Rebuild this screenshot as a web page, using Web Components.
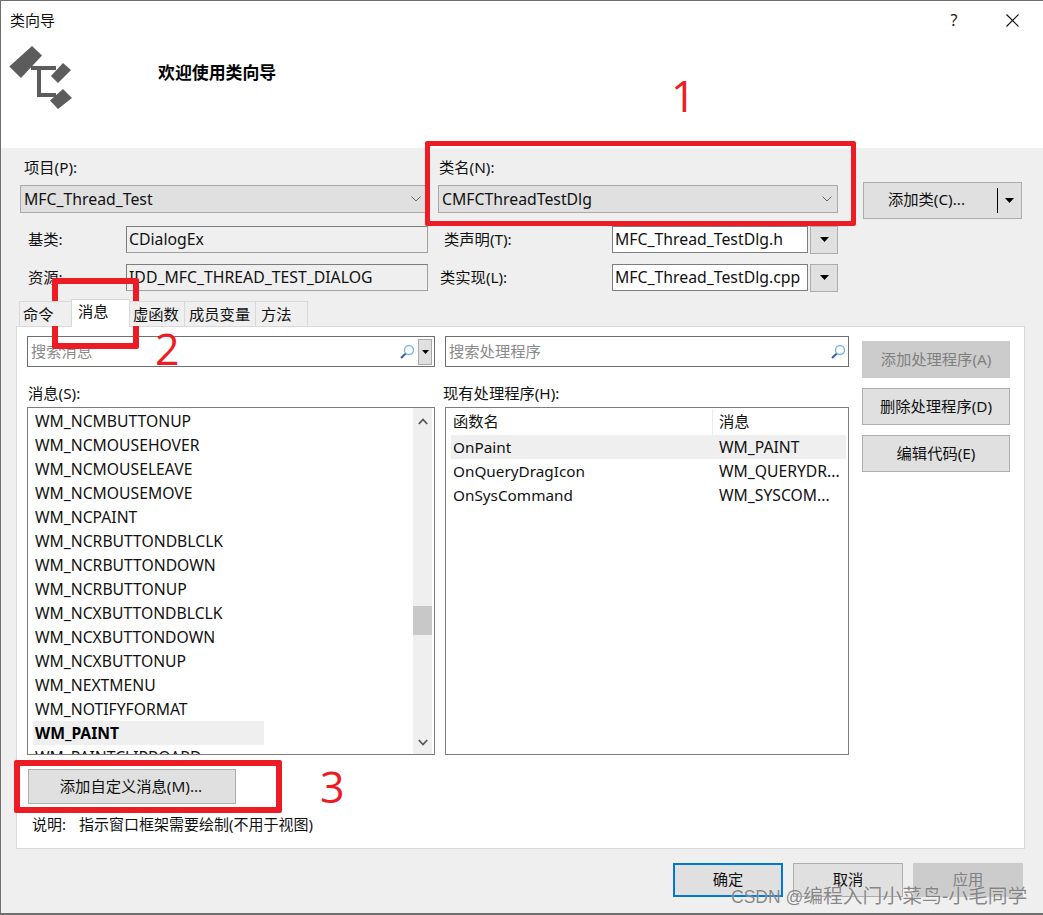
<!DOCTYPE html>
<html lang="zh-CN">
<head>
<meta charset="utf-8">
<title>类向导</title>
<style>
html,body{margin:0;padding:0;background:#fff}
body{width:1043px;height:915px;overflow:hidden;position:relative;font:15.3px/20px "Noto Sans","Noto Sans CJK SC",sans-serif;color:#111}
</style>
</head>
<body>
<x-dialog>
  <x-wizard-header></x-wizard-header>
  <x-class-form></x-class-form>
  <x-tab-strip></x-tab-strip>
  <x-message-pane></x-message-pane>
  <x-dialog-footer></x-dialog-footer>
</x-dialog>
<x-annot style="--l:425px;--t:141px;--w:431px;--h:85px;--b:5px"></x-annot>
<x-annot style="--l:52px;--t:278px;--w:87px;--h:71px;--b:6px"></x-annot>
<x-annot style="--l:14px;--t:760px;--w:268px;--h:53px;--b:6px"></x-annot>
<x-mark style="--l:671px;--t:66px">1</x-mark>
<x-mark style="--l:155px;--t:319px">2</x-mark>
<x-mark style="--l:320px;--t:757px">3</x-mark>
<x-watermark>CSDN @<span style="font-size:19.800px">编程入门小菜鸟-小毛同学</span></x-watermark>
<script>
const FONT='"Noto Sans","Noto Sans CJK SC",sans-serif';
function def(name,css,html){
  customElements.define(name,class extends HTMLElement{
    constructor(){super();const r=this.attachShadow({mode:'open'});r.innerHTML='<style>'+css+'</style>'+html;}
  });
}
const DOWN='<svg width="9" height="5" viewBox="0 0 9 5"><path d="M0 0h9L4.5 5z" fill="#000"/></svg>';
const MAG='<svg width="16" height="16" viewBox="0 0 16 16" fill="none"><circle cx="10" cy="6" r="4.5" stroke="#7db6e2" stroke-width="1.4"/><path d="M6.6 9.6 2 14" stroke="#2d5c9e" stroke-width="2"/></svg>';

def('x-dialog',`:host{display:flex;flex-direction:column;box-sizing:border-box;width:1043px;height:915px;background:#efefef;border:solid #6f6f6f;border-width:1px 0 2px 1px;position:relative}`,`<slot></slot>`);

def('x-wizard-header',`:host{display:block;height:147px;box-sizing:border-box;background:#fff;padding:9px 0 0 9px}
.bar{display:flex;align-items:center;height:20px;font-size:15px}
.t{flex:1}.q{width:20px;text-align:center;margin-right:42px;color:#222;font-size:16px}
.x{margin-right:24px;display:flex}
.main{display:flex;align-items:flex-start;margin-top:15px}
svg.logo{display:block;flex:none;margin-left:-1px}
h1{font:bold 16.9px/22px ${FONT};margin:17px 0 0 85px;color:#000}`,
`<div class="bar"><span class="t">类向导</span><span class="q">?</span><span class="x"><svg width="13" height="13" viewBox="0 0 13 13"><path d="M.5.5l12 12M12.5.5l-12 12" stroke="#111" stroke-width="1.1"/></svg></span></div>
<div class="main"><svg class="logo" width="64" height="66" viewBox="9 45 64 66"><path fill="#5c5c5c" d="M9.3 66.6 32 46l10 9.4L21 78zM51 76l12-13 8 7-13 13zM50 100.6 63 89l9 9-14 11z"/><path fill="none" stroke="#5c5c5c" stroke-width="4" d="M31 68H56M39 68V95H56"/></svg><h1>欢迎使用类向导</h1></div>`);

def('x-combo',`:host{display:flex;align-items:center;box-sizing:border-box;height:28px;background:#e0e0e0;border:1px solid #a9a9a9;padding:0 4px 0 3px;font-size:15.8px}
.v{flex:1;white-space:nowrap}svg{display:block;margin-right:1px}`,
`<span class="v"><slot></slot></span><svg width="10" height="6" viewBox="0 0 10 6" fill="none"><path d="M.5.5 5 5 9.500.5" stroke="#666" stroke-width="1"/></svg>`);

def('x-edit',`:host{display:flex;align-items:center;box-sizing:border-box;height:27px;border:1px solid #7d7d7d;border-right-color:#a0a0a0;border-bottom-color:#a0a0a0;padding:0 2px 2px 2px;white-space:nowrap;overflow:hidden;background:#efefef;font-size:15.8px}
:host([white]){background:#fff;border-color:#7d7d7d}`,`<slot></slot>`);

def('x-drop',`:host{display:flex;align-items:center;justify-content:center;box-sizing:border-box;width:28px;height:28px;background:#e0e0e0;border:1px solid #adadad}`,DOWN);

def('x-btn',`:host{display:flex;align-items:center;justify-content:center;box-sizing:border-box;background:#e0e0e0;border:1px solid #adadad;white-space:nowrap;color:#111;padding-bottom:2px}
:host([disabled]){background:#ccc;border-color:#ccc;color:#808080}
:host([primary]){border:2px solid #0078d7}`,`<slot></slot>`);

def('x-split-btn',`:host{display:flex;align-items:center;box-sizing:border-box;width:159px;height:37px;background:#e0e0e0;border:1px solid #adadad}
.l{width:125px;text-align:center;box-sizing:border-box;margin-right:8px;padding-bottom:3px}.d{width:1px;height:25px;background:#000}.a{flex:1;display:flex;justify-content:center}`,
`<span class="l"><slot></slot></span><span class="d"></span><span class="a">${DOWN}</span>`);

def('x-class-form',`:host{display:block;padding:0 0 0 19px}
.top{display:grid;grid-template-columns:407px 400px 159px;column-gap:11px;grid-template-rows:34px 37px}
.top .lb{align-self:end;height:20px;margin-bottom:5px}
.a{padding-left:4px}.b{padding-left:1px}
x-combo{margin-top:3px}
x-split-btn{margin-left:14px}
.info{display:grid;grid-template-columns:106px 302px 10px 174px 196px 2px 28px;grid-template-rows:27px 27px;row-gap:11px;margin-top:7px;align-items:center}
.p8,.p6,.p2{padding-bottom:2px}
.p8{padding-left:8px}.p6{padding-left:6px}.p2{padding-left:2px}`,
`<div class="top">
<span class="lb a">项目(P):</span><span class="lb b">类名(N):</span><span></span>
<x-combo>MFC_Thread_Test</x-combo><x-combo>CMFCThreadTestDlg</x-combo><x-split-btn>添加类(C)...</x-split-btn>
</div>
<div class="info">
<span class="p8">基类:</span><x-edit>CDialogEx</x-edit><i></i><span class="p6">类声明(T):</span><x-edit white>MFC_Thread_TestDlg.h</x-edit><i></i><x-drop></x-drop>
<span class="p8">资源:</span><x-edit>IDD_MFC_THREAD_TEST_DIALOG</x-edit><i></i><span class="p2">类实现(L):</span><x-edit white>MFC_Thread_TestDlg.cpp</x-edit><i></i><x-drop></x-drop>
</div>`);

def('x-tab',`:host{display:flex;align-items:center;box-sizing:border-box;height:25px;margin-top:2px;padding:0 0 1px var(--p,5px);border:1px solid #d9d9d9;border-bottom:0;margin-left:-1px;background:#efefef;white-space:nowrap}
:host([active]){height:28px;margin-top:0;background:#fff;z-index:1;padding-bottom:6px}`,`<slot></slot>`);

def('x-tab-strip',`:host{display:flex;height:27px;margin-top:8px;padding-left:19px;position:relative;z-index:1;align-items:flex-start}
.a{width:53px;--p:3px}.b{width:59px;--p:6px}.c{width:56px;--p:3px}.d{width:72px;--p:4px}.e{width:53px;--p:5px}`,
`<x-tab class="a">命令</x-tab><x-tab class="b" active>消息</x-tab><x-tab class="c">虚函数</x-tab><x-tab class="d">成员变量</x-tab><x-tab class="e">方法</x-tab>`);

def('x-search',`:host{display:flex;align-items:center;box-sizing:border-box;height:31px;background:#fff;border:1px solid #6f6f6f;padding:0 2px 0 3px;color:#8a8a8a}
.t{flex:1;white-space:nowrap;padding-bottom:2px}.m{display:flex;margin-right:3px}
.d{display:none;width:14px;height:26px;box-sizing:border-box;background:#e0e0e0;border:1px solid #a9a9a9;align-items:center;justify-content:center}
.d svg{width:7px;height:4px}
:host([drop]) .d{display:flex}
:host(:not([drop])) .m{margin-right:0}`,
`<span class="t"><slot></slot></span><span class="m">${MAG}</span><span class="d">${DOWN}</span>`);

def('x-scroll',`:host{display:flex;flex-direction:column;align-items:stretch;box-sizing:border-box;width:19px;background:#efefef;flex:none}
.u{height:26px;display:flex;align-items:center;justify-content:center}
.sp{height:172px}.th{height:29px;background:#c8c8c8}.f{flex:1}
.dn{height:24px;display:flex;align-items:center;justify-content:center}`,
`<div class="u"><svg width="10" height="7" viewBox="0 0 10 7" fill="none"><path d="M.8 6 5 1.5 9.200 6" stroke="#555" stroke-width="1.800"/></svg></div><div class="sp"></div><div class="th"></div><div class="f"></div>
<div class="dn"><svg width="10" height="7" viewBox="0 0 10 7" fill="none"><path d="M.8 1 5 5.500 9.200 1" stroke="#555" stroke-width="1.800"/></svg></div>`);

def('x-msg-item',`:host{display:block;box-sizing:border-box;height:24px;line-height:24px;padding-left:2px;width:231px;margin-left:-2px;white-space:nowrap;font-size:15.700px}
:host([sel]){background:#efefef;font-weight:700;color:#000}`,`<slot></slot>`);

def('x-msg-list',`:host{display:flex;box-sizing:border-box;height:348px;background:#fff;border:1px solid #7d7d7d;overflow:hidden;padding-right:2px}
.v{flex:1;overflow:hidden;padding:1px 0 0 7px;min-width:0}`,
`<div class="v">`+['WM_NCMBUTTONUP','WM_NCMOUSEHOVER','WM_NCMOUSELEAVE','WM_NCMOUSEMOVE','WM_NCPAINT','WM_NCRBUTTONDBLCLK','WM_NCRBUTTONDOWN','WM_NCRBUTTONUP','WM_NCXBUTTONDBLCLK','WM_NCXBUTTONDOWN','WM_NCXBUTTONUP','WM_NEXTMENU','WM_NOTIFYFORMAT'].map(s=>`<x-msg-item>${s}</x-msg-item>`).join('')+`<x-msg-item sel>WM_PAINT</x-msg-item><x-msg-item>WM_PAINTCLIPBOARD</x-msg-item></div><x-scroll></x-scroll>`);

def('x-handler-row',`:host{display:grid;grid-template-columns:266px 1fr;height:24px;line-height:24px;padding-left:2px;white-space:nowrap;overflow:hidden;font-size:15.700px}
:host([sel]){background:#efefef}`,`<slot></slot>`);

def('x-handler-list',`:host{display:block;box-sizing:border-box;height:348px;background:#fff;border:1px solid #7d7d7d;padding:1px 2px 0 5px}
.h{display:grid;grid-template-columns:259px 1px 1fr;height:26px;line-height:24px;padding-left:2px}
.h i{background:#ececec}.h span:last-child{padding-left:6px}
x-handler-row span:first-child{font-size:15.300px}`,
`<div class="h"><span>函数名</span><i></i><span>消息</span></div>
<x-handler-row sel><span>OnPaint</span><span>WM_PAINT</span></x-handler-row>
<x-handler-row><span>OnQueryDragIcon</span><span>WM_QUERYDR...</span></x-handler-row>
<x-handler-row><span>OnSysCommand</span><span>WM_SYSCOM...</span></x-handler-row>`);

def('x-message-pane',`:host{display:block;box-sizing:border-box;width:1009px;height:523px;margin-left:15px;background:#fff;border:1px solid #d9d9d9;padding:9px 0 0 10px}
.g{display:grid;grid-template-columns:408px 404px 151px;column-gap:10px}
.g>:nth-child(3n){margin-left:3px}
.lb{height:40px;display:flex;align-items:flex-end;padding-bottom:4px;box-sizing:border-box;padding-left:1px;white-space:nowrap}
.r .lb{padding-left:0;margin-left:-2px}
.acts{display:flex;flex-direction:column;gap:10px;padding-top:5px}
.acts x-btn{height:37px}
.add{display:flex;width:208px;height:35px;margin:14px 0 0 1px;padding-right:2px}
.note{display:flex;margin:10px 0 0 5px;font-size:15px}.note b{font-weight:400;width:47px}`,
`<div class="g">
<div><x-search drop>搜索消息</x-search><div class="lb">消息(S):</div><x-msg-list></x-msg-list></div>
<div class="r"><x-search>搜索处理程序</x-search><div class="lb">现有处理程序(H):</div><x-handler-list></x-handler-list></div>
<div class="acts"><x-btn disabled>添加处理程序(A)</x-btn><x-btn>删除处理程序(D)</x-btn><x-btn>编辑代码(E)</x-btn></div>
</div>
<x-btn class="add">添加自定义消息(M)...</x-btn>
<div class="note"><b>说明:</b><span>指示窗口框架需要绘制(不用于视图)</span></div>`);

def('x-dialog-footer',`:host{display:flex;justify-content:flex-end;gap:10px;padding:14px 20px 0 0}
x-btn{width:110px;height:34px}`,
`<x-btn primary>确定</x-btn><x-btn>取消</x-btn><x-btn disabled>应用</x-btn>`);

def('x-annot',`:host{position:absolute;left:var(--l);top:var(--t);width:var(--w);height:var(--h);box-sizing:border-box;border:var(--b) solid #ed1c24;border-radius:2px}`,``);
def('x-mark',`:host{position:absolute;left:var(--l);top:var(--t);font:43px/60px "Open Sans",sans-serif;color:#ed1c24}`,`<slot></slot>`);
def('x-watermark',`:host{position:absolute;left:731px;top:884px;font:17.500px/24px "Liberation Sans","Noto Sans CJK SC",sans-serif;color:rgba(90,90,90,.72);white-space:nowrap;text-shadow:0 0 1px rgba(255,255,255,.8)}`,`<slot></slot>`);
</script>
</body>
</html>
